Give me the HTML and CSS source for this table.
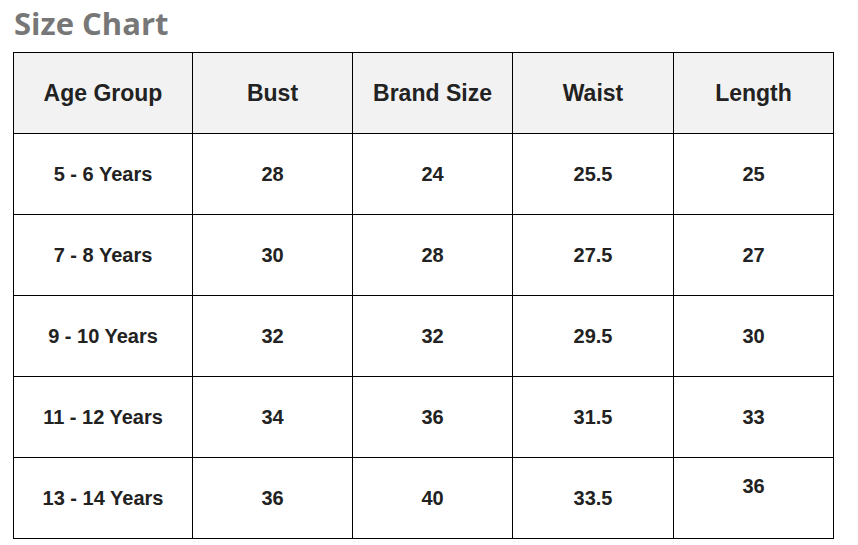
FILE: index.html
```html
<!DOCTYPE html>
<html>
<head>
<meta charset="utf-8">
<link rel="stylesheet" href="styles.css">
</head>
<body>
<div class="page">
  <h2 class="title">Size Chart</h2>
  <table class="chart">
    <colgroup>
      <col class="c1"><col class="c2"><col class="c3"><col class="c4"><col class="c5">
    </colgroup>
    <thead>
      <tr><th>Age Group</th><th>Bust</th><th>Brand Size</th><th>Waist</th><th>Length</th></tr>
    </thead>
    <tbody>
      <tr><td>5 - 6 Years</td><td>28</td><td>24</td><td>25.5</td><td>25</td></tr>
      <tr><td>7 - 8 Years</td><td>30</td><td>28</td><td>27.5</td><td>27</td></tr>
      <tr><td>9 - 10 Years</td><td>32</td><td>32</td><td>29.5</td><td>30</td></tr>
      <tr><td>11 - 12 Years</td><td>34</td><td>36</td><td>31.5</td><td>33</td></tr>
      <tr><td>13 - 14 Years</td><td>36</td><td>40</td><td>33.5</td><td class="raised">36</td></tr>
    </tbody>
  </table>
</div>
</body>
</html>
```
FILE: styles.css
```css
html, body {
  margin: 0;
  padding: 0;
  background: #fff;
}
.page {
  padding: 7px 0 0 13px;
}
.title {
  margin: 0 0 13px 1px;
  font-family: "Open Sans", "Noto Sans", sans-serif;
  font-weight: 700;
  font-size: 31px;
  line-height: 32px;
  color: #777;
}
.chart {
  border-collapse: collapse;
  table-layout: fixed;
  width: 821px;
  font-family: "Liberation Sans", Arial, sans-serif;
  color: #222;
}
.c1 { width: 179px; }
.c2 { width: 160px; }
.c3 { width: 160px; }
.c4 { width: 161px; }
.c5 { width: 160px; }
.chart th,
.chart td {
  border: 1px solid #000;
  padding: 0;
  height: 80px;
  text-align: center;
  vertical-align: middle;
  font-weight: 700;
}
.chart th {
  background: #f2f2f2;
  font-size: 23px;
}
.chart td {
  font-size: 20px;
  line-height: 23px;
}
.chart td.raised {
  vertical-align: top;
  padding-top: 17px;
  height: 63px;
}
```
